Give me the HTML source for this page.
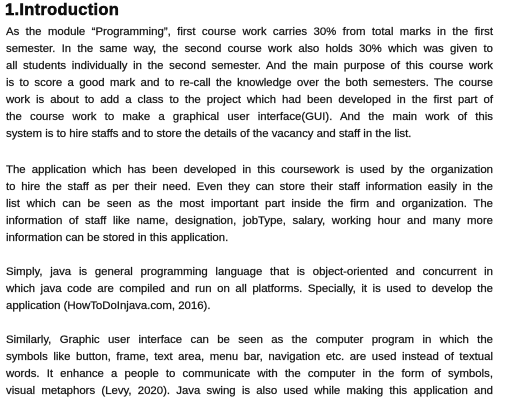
<!DOCTYPE html>
<html><head><meta charset="utf-8"><style>
html,body{margin:0;padding:0;background:#fff;width:505px;height:400px;overflow:hidden}
body{font-family:"Liberation Sans",Arial,sans-serif;color:#111;}
h1{position:absolute;left:5px;top:0px;margin:0;font-size:16.5px;font-weight:900;letter-spacing:0.3px;line-height:20px;-webkit-text-stroke:0.5px #000}
.l{position:absolute;left:6px;width:487px;font-size:11.4px;line-height:17px;white-space:nowrap;text-align:justify;text-align-last:justify;-webkit-text-stroke:0.25px #222}
.e{text-align-last:left}
</style></head><body>
<h1>1.Introduction</h1>
<div class="l" style="top:24px">As the module “Programming”, first course work carries 30% from total marks in the first</div>
<div class="l" style="top:41px">semester. In the same way, the second course work also holds 30% which was given to</div>
<div class="l" style="top:58px">all students individually in the second semester. And the main purpose of this course work</div>
<div class="l" style="top:75px">is to score a good mark and to re-call the knowledge over the both semesters. The course</div>
<div class="l" style="top:92px">work is about to add a class to the project which had been developed in the first part of</div>
<div class="l" style="top:109px">the course work to make a graphical user interface(GUI). And the main work of this</div>
<div class="l e" style="top:126px">system is to hire staffs and to store the details of the vacancy and staff in the list.</div>
<div class="l" style="top:162px">The application which has been developed in this coursework is used by the organization</div>
<div class="l" style="top:179px">to hire the staff as per their need. Even they can store their staff information easily in the</div>
<div class="l" style="top:196px">list which can be seen as the most important part inside the firm and organization. The</div>
<div class="l" style="top:213px">information of staff like name, designation, jobType, salary, working hour and many more</div>
<div class="l e" style="top:230px">information can be stored in this application.</div>
<div class="l" style="top:264px">Simply, java is general programming language that is object-oriented and concurrent in</div>
<div class="l" style="top:281px">which java code are compiled and run on all platforms. Specially, it is used to develop the</div>
<div class="l e" style="top:298px">application (HowToDoInjava.com, 2016).</div>
<div class="l" style="top:332px">Similarly, Graphic user interface can be seen as the computer program in which the</div>
<div class="l" style="top:349px">symbols like button, frame, text area, menu bar, navigation etc. are used instead of textual</div>
<div class="l" style="top:366px">words. It enhance a people to communicate with the computer in the form of symbols,</div>
<div class="l" style="top:383px">visual metaphors (Levy, 2020). Java swing is also used while making this application and</div>
</body></html>
